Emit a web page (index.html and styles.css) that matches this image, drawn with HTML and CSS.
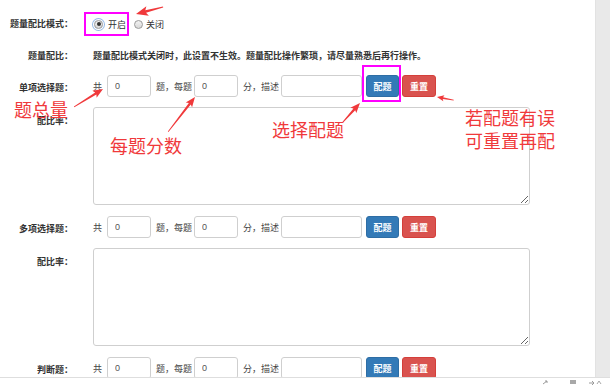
FILE: index.html
```html
<!DOCTYPE html>
<html lang="zh-CN">
<head>
<meta charset="utf-8">
<title>题量配比</title>
<link rel="stylesheet" href="styles.css">
</head>
<body>
<div class="viewport">
  <main class="form">
    <div class="row row-mode">
      <div class="label">题量配比模式：</div>
      <div class="controls">
        <span class="radio checked"><span class="dot"></span></span>
        <span class="radio-text">开启</span>
        <span class="radio"></span>
        <span class="radio-text radio-text-2">关闭</span>
      </div>
    </div>
    <div class="row row-note">
      <div class="label">题量配比：</div>
      <div class="note-text">题量配比模式关闭时，此设置不生效。题量配比操作繁琐，请尽量熟悉后再行操作。</div>
    </div>
    <div class="row row-count first">
      <div class="label">单项选择题：</div>
      <div class="controls">
        <span class="t t-gong">共</span>
        <input class="inp inp-n" value="0">
        <span class="t t-mid">题，每题</span>
        <input class="inp inp-n" value="0">
        <span class="t t-mid">分，描述</span>
        <input class="inp inp-desc" value="">
        <button class="btn btn-blue">配题</button>
        <button class="btn btn-red">重置</button>
      </div>
    </div>
    <div class="row row-area">
      <div class="label">配比率：</div>
      <textarea class="area"></textarea>
    </div>
    <div class="row row-count">
      <div class="label">多项选择题：</div>
      <div class="controls">
        <span class="t t-gong">共</span>
        <input class="inp inp-n" value="0">
        <span class="t t-mid">题，每题</span>
        <input class="inp inp-n" value="0">
        <span class="t t-mid">分，描述</span>
        <input class="inp inp-desc" value="">
        <button class="btn btn-blue">配题</button>
        <button class="btn btn-red">重置</button>
      </div>
    </div>
    <div class="row row-area">
      <div class="label">配比率：</div>
      <textarea class="area"></textarea>
    </div>
    <div class="row row-count">
      <div class="label">判断题：</div>
      <div class="controls">
        <span class="t t-gong">共</span>
        <input class="inp inp-n" value="0">
        <span class="t t-mid">题，每题</span>
        <input class="inp inp-n" value="0">
        <span class="t t-mid">分，描述</span>
        <input class="inp inp-desc" value="">
        <button class="btn btn-blue">配题</button>
        <button class="btn btn-red">重置</button>
      </div>
    </div>
  </main>
  <div class="scrollbar"></div>
</div>
<div class="statusbar">
  <svg class="status-icons" width="70" height="8" viewBox="0 0 70 8">
    <path d="M3 6 L7 3 M5 3 H7 V5" stroke="#9a9a9a" stroke-width="1" fill="none"/>
    <rect x="30" y="2" width="6" height="4" fill="#a8a8a8"/>
    <path d="M49 5 H54 M52 3 L54 5 L52 7" stroke="#9a9a9a" stroke-width="1" fill="none"/>
    <path d="M57 6 L59 3 L61 6" stroke="#a8a8a8" stroke-width="1" fill="none"/>
  </svg>
</div>

<div class="hl hl-mode"></div>
<div class="hl hl-btn"></div>

<svg class="arrows" width="610" height="386" viewBox="0 0 610 386">
  <g fill="#f0393b">
    <polygon transform="translate(136,14) rotate(165.5)" points="0,0 -12,-5 -10,-1.4 -28,-0.4 -28,0.4 -10,1.4 -12,5"/>
    <polygon transform="translate(103,89) rotate(-31.8)" points="0,0 -10,-4 -8.5,-1.2 -34,-0.4 -34,0.4 -8.5,1.2 -10,4"/>
    <polygon transform="translate(195,97) rotate(-52.4)" points="0,0 -10,-4 -8.5,-1.2 -44,-0.4 -44,0.4 -8.5,1.2 -10,4"/>
    <polygon transform="translate(360,103) rotate(-48.2)" points="0,0 -10,-4 -8.5,-1.2 -26,-0.4 -26,0.4 -8.5,1.2 -10,4"/>
    <polygon transform="translate(437,97) rotate(190.6)" points="0,0 -7,-3 -6,-0.9 -17,-0.3 -17,0.3 -6,0.9 -7,3"/>
  </g>
</svg>

<div class="anno anno-total">题总量</div>
<div class="anno anno-each">每题分数</div>
<div class="anno anno-pick">选择配题</div>
<div class="anno anno-reset">若配题有误<br>可重置再配</div>
</body>
</html>
```

FILE: styles.css
```css
* {
  box-sizing: border-box;
}

html,
body {
  margin: 0;
  padding: 0;
}

body {
  width: 610px;
  height: 386px;
  overflow: hidden;
  position: relative;
  background: #fff;
  color: #333;
  font-family: "Noto Sans CJK SC", "Noto Sans", sans-serif;
  font-size: 9px;
}

.viewport {
  display: flex;
  height: 377px;
}

.form {
  flex: 1;
  overflow: hidden;
  padding-top: 14px;
}

.scrollbar {
  width: 15px;
  flex: none;
  background: #e9e9e9;
  border-left: 1px solid #e2e2e2;
}

.statusbar {
  height: 9px;
  border-top: 1px solid #dedede;
  background: #fff;
  display: flex;
  justify-content: flex-end;
  align-items: center;
}

.status-icons {
  display: block;
}

/* rows */
.row {
  display: flex;
  align-items: flex-start;
}

.label {
  flex: none;
  width: 73px;
  margin-right: 20px;
  text-align: right;
  font-weight: 700;
  line-height: 22px;
  white-space: nowrap;
  color: #333;
}

.controls {
  display: flex;
  align-items: center;
  height: 22px;
  white-space: nowrap;
}

.row-mode {
  height: 20px;
}

.row-mode .label {
  line-height: 20px;
}

.row-mode .controls {
  height: 20px;
}

.row-note {
  margin-top: 12px;
  height: 20px;
}

.row-note .label {
  line-height: 20px;
}

.note-text {
  line-height: 20px;
  font-weight: 700;
  white-space: nowrap;
  color: #333;
}

.row-count {
  margin-top: 11px;
  height: 22px;
}

.row-count.first {
  margin-top: 9px;
}

.row-count .label {
  line-height: 20px;
  padding-top: 3px;
  height: 22px;
}

.row-area {
  margin-top: 10px;
}

.row-area .label {
  padding-top: 3px;
}

/* radios */
.radio {
  width: 9px;
  height: 9px;
  border-radius: 50%;
  border: 1px solid #9a9a9a;
  background: linear-gradient(#f2f2f2, #d8d8d8);
  display: flex;
  align-items: center;
  justify-content: center;
  margin-left: 8px;
}

.radio.checked {
  margin-left: 1px;
  box-shadow: 0 0 0 1px #fff, 0 0 0 2px #93b8e6;
}

.radio .dot {
  width: 4px;
  height: 4px;
  border-radius: 50%;
  background: #333;
}

.radio-text {
  margin-left: 5px;
  color: #333;
}

.radio-text-2 {
  margin-left: 3px;
}

/* inline text and inputs */
.t {
  color: #444;
}

.t-gong {
  margin-right: 5px;
}

.t-mid {
  margin-left: 5px;
  margin-right: 2px;
}

.inp {
  height: 22px;
  border: 1px solid #cfcfcf;
  border-radius: 3px;
  padding: 0 0 0 7px;
  font-family: "Liberation Sans", sans-serif;
  font-size: 9px;
  color: #555;
  background: #fff;
  outline: none;
}

.inp-n {
  width: 44px;
}

.inp-desc {
  width: 81px;
}

.btn {
  height: 22px;
  border-radius: 3px;
  color: #fff;
  font-family: "Noto Sans CJK SC", sans-serif;
  font-size: 9px;
  font-weight: 700;
  padding: 0;
  cursor: pointer;
}

.btn-blue {
  width: 33px;
  margin-left: 4px;
  background: #337ab7;
  border: 1px solid #2e6da4;
}

.btn-red {
  width: 34px;
  margin-left: 3px;
  background: #d9534f;
  border: 1px solid #d43f3a;
}

.area {
  display: block;
  width: 437px;
  height: 98px;
  border: 1px solid #cfcfcf;
  border-radius: 3px;
  margin: 0;
  padding: 4px;
  background: #fff;
}

/* overlays */
.hl {
  position: absolute;
  border: 2px solid #f0f;
}

.hl-mode {
  left: 84px;
  top: 12px;
  width: 45px;
  height: 24px;
}

.hl-btn {
  left: 362px;
  top: 65px;
  width: 39px;
  height: 37px;
}

.arrows {
  position: absolute;
  left: 0;
  top: 0;
  pointer-events: none;
}

.anno {
  position: absolute;
  color: #f0393b;
  font-family: "Noto Sans CJK SC", sans-serif;
  font-weight: 400;
  font-size: 18px;
  line-height: 18px;
  white-space: nowrap;
}

.anno-total {
  left: 14px;
  top: 100px;
}

.anno-each {
  left: 110px;
  top: 136px;
}

.anno-pick {
  left: 272px;
  top: 120px;
}

.anno-reset {
  left: 465px;
  top: 106px;
  line-height: 23px;
}
```
